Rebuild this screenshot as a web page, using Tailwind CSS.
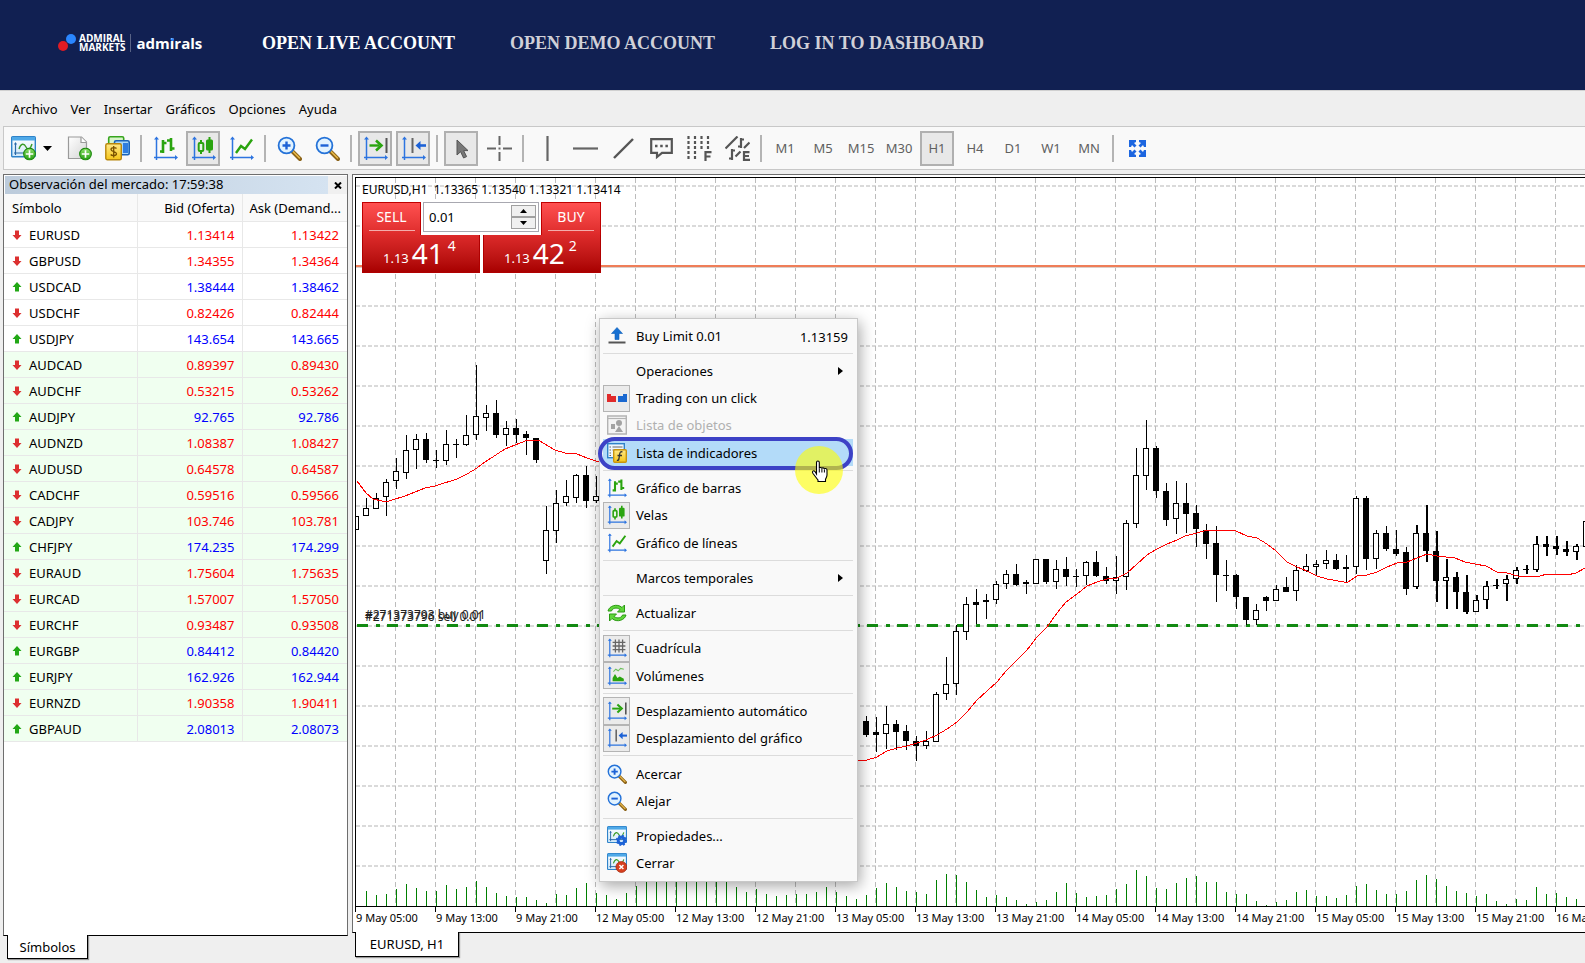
<!DOCTYPE html>
<html lang="es">
  <head>
    <meta charset="UTF-8" />
    <title>Admiral Markets - WebTrader</title>
    <script src="https://cdn.jsdelivr.net/npm/@tailwindcss/browser@4"></script>
  </head>
  <body class="min-h-screen flex flex-col bg-[#efefef] text-black text-[13px] leading-4 font-['Noto_Sans',sans-serif] overflow-x-hidden">

    <!-- Iconos -->
    <svg class="absolute w-0 h-0">
      <defs>
        <linearGradient id="g-win" x1="0" y1="0" x2="0" y2="1"><stop offset="0" stop-color="#fff" /><stop offset="1" stop-color="#cfe9fb" /></linearGradient>
        <linearGradient id="g-green" x1="0" y1="0" x2="0" y2="1"><stop offset="0" stop-color="#8ee06a" /><stop offset="1" stop-color="#25a012" /></linearGradient>
        <linearGradient id="g-gold" x1="0" y1="0" x2="0" y2="1"><stop offset="0" stop-color="#ffe98a" /><stop offset="1" stop-color="#f5c518" /></linearGradient>
        <linearGradient id="g-doc" x1="0" y1="0" x2="1" y2="1"><stop offset="0" stop-color="#fff" /><stop offset="1" stop-color="#d4d4d4" /></linearGradient>
      </defs>
      <symbol id="axis" viewBox="0 0 25 25">
        <path d="M3.500 2v22M1 21.500h22" stroke="#2d74e0" stroke-width="1.500" fill="none" />
        <path d="M1 3.500 3.500 .5 6 3.500zM22 19l3 2.500-3 2.500z" fill="#2d74e0" />
      </symbol>
      <symbol id="plus" viewBox="0 0 14 14">
        <circle cx="7" cy="7" r="6.300" fill="url(#g-green)" stroke="#1f8a10" stroke-width="1.200" />
        <path d="M7 3v8M3 7h8" stroke="#fff" stroke-width="1.800" />
      </symbol>
      <symbol id="window" viewBox="0 0 25 25">
        <rect x=".7" y=".7" width="23.600" height="20" rx="1" fill="url(#g-win)" stroke="#2f83c9" stroke-width="1.400" />
        <rect x="1" y="1" width="23" height="3.500" fill="#4fa9e8" />
        <path d="M4.500 7v12M3 17h19" stroke="#2b6aa8" stroke-width="1.200" />
        <path d="M3 8.500 4.500 6 6 8.500z" fill="#2b6aa8" />
        <path d="M8 13c2-6 5-6 7-2s4 3 6-3" fill="none" stroke="#3a9c28" stroke-width="1.400" />
      </symbol>
      <symbol id="newchart" viewBox="0 0 25 25">
        <use href="#window" />
        <use href="#plus" x="12" y="11.500" width="13" height="13" />
      </symbol>
      <symbol id="newdoc" viewBox="0 0 25 25">
        <path d="M1.500 1h13l5 5v16.500h-18z" fill="url(#g-doc)" stroke="#9a9a9a" stroke-width="1.200" />
        <path d="M14 1v5.500h5.500" fill="#fff" stroke="#9a9a9a" stroke-width="1.200" />
        <use href="#plus" x="12" y="11.500" width="13" height="13" />
      </symbol>
      <symbol id="symbols" viewBox="0 0 25 25">
        <rect x="3.700" y=".8" width="15" height="14" rx="1.500" fill="#d7f5c9" stroke="#37a51e" stroke-width="1.600" />
        <rect x="9.500" y="4.700" width="14.700" height="14" rx="1.500" fill="#a8d8fa" stroke="#1c64b8" stroke-width="1.600" />
        <rect x="18" y="7" width="5" height="10" fill="#2f7de0" />
        <rect x=".8" y="7.800" width="15.500" height="16" rx="1.500" fill="url(#g-gold)" stroke="#b8860b" stroke-width="1.400" />
        <path d="M11.500 12.500c-1-1.300-5.500-1.500-5.500 1s5.500 1.800 5.500 4.200-4.800 2.200-5.800.8M8.700 10v11.500" fill="none" stroke="#7a5200" stroke-width="1.300" />
      </symbol>
      <symbol id="bars" viewBox="0 0 25 25">
        <use href="#axis" />
        <path d="M10 4v13M10 15.500H7M10 7h3.500M18 2v13M18 4.500h-4M18 12.500h3.500" stroke="#2aa40f" stroke-width="2.600" fill="none" />
      </symbol>
      <symbol id="candles" viewBox="0 0 25 25">
        <use href="#axis" />
        <path d="M10 4v14M18.500 1v16" stroke="#2aa40f" stroke-width="2" />
        <rect x="7.700" y="7" width="4.600" height="8" rx="1" fill="#e9f7e6" stroke="#2aa40f" stroke-width="2" />
        <rect x="15" y="3.500" width="7" height="11" rx="1.500" fill="#2aa40f" />
      </symbol>
      <symbol id="line" viewBox="0 0 25 25">
        <use href="#axis" />
        <path d="M7 17l5-7 4 3 7-9.500" stroke="#2aa40f" stroke-width="2.400" fill="none" />
      </symbol>
      <symbol id="zoom" viewBox="0 0 25 25">
        <path d="M15.500 15.500 23 23" stroke="#8a6116" stroke-width="4" stroke-linecap="round" />
        <path d="M16 15.500l6.500 6.500" stroke="#e9b949" stroke-width="1.600" stroke-linecap="round" />
        <circle cx="9.500" cy="9.500" r="7.900" fill="#e2f3ff" stroke="#2472d8" stroke-width="1.800" />
      </symbol>
      <symbol id="zoomin" viewBox="0 0 25 25">
        <use href="#zoom" />
        <path d="M9.500 5.500v8M5.500 9.500h8" stroke="#1d62d6" stroke-width="2.400" />
      </symbol>
      <symbol id="zoomout" viewBox="0 0 25 25">
        <use href="#zoom" />
        <path d="M5.500 9.500h8" stroke="#1d62d6" stroke-width="2.400" />
      </symbol>
      <symbol id="autoscroll" viewBox="0 0 25 25">
        <use href="#axis" />
        <path d="M6.500 9.500h10" stroke="#2aa40f" stroke-width="2.400" />
        <path d="M13 4.500l5.500 5-5.500 5" fill="none" stroke="#2aa40f" stroke-width="2.600" />
        <path d="M23.500 2v15" stroke="#555" stroke-width="2" />
      </symbol>
      <symbol id="shift" viewBox="0 0 25 25">
        <use href="#axis" />
        <path d="M11.500 2v15" stroke="#666" stroke-width="2" />
        <path d="M17 9.500h8" stroke="#1d62d6" stroke-width="2.600" />
        <path d="M14.500 9.500l5-4.500v9z" fill="#1d62d6" />
      </symbol>
      <symbol id="cursor" viewBox="0 0 25 25">
        <path d="M8 4v15l3.600-3.300 3 6.300 3-1.400-3-6H19z" fill="#777" stroke="#555" stroke-width="1" />
      </symbol>
      <symbol id="cross" viewBox="0 0 25 25">
        <path d="M12.500 0v9M12.500 16v9M0 12.500h9M16 12.500h9" stroke="#666" stroke-width="2" />
        <rect x="11.500" y="11.500" width="2" height="2" fill="#666" />
      </symbol>
      <symbol id="vline" viewBox="0 0 25 25"><path d="M12.500 0v25" stroke="#666" stroke-width="2.200" /></symbol>
      <symbol id="hline" viewBox="0 0 25 25"><path d="M0 12.500h25" stroke="#666" stroke-width="2.200" /></symbol>
      <symbol id="trend" viewBox="0 0 25 25"><path d="M3 22l19-19" stroke="#555" stroke-width="2.400" /></symbol>
      <symbol id="text" viewBox="0 0 25 25">
        <path d="M2.200 3.200h20.600v13.600H13L8 21v-4.200H2.200z" fill="none" stroke="#555" stroke-width="2.200" />
        <path d="M6 10h2.500M11.200 10h2.500M16.400 10h2.500" stroke="#555" stroke-width="2.400" />
      </symbol>
      <symbol id="fibo" viewBox="0 0 25 25">
        <path d="M1.500 0v25M8 0v25M14.500 0v14M21 0v14" stroke="#555" stroke-width="2.200" stroke-dasharray="3 2" />
        <path d="M18.500 25v-8.800h6M18.500 20.500h5" fill="none" stroke="#555" stroke-width="2.200" />
      </symbol>
      <symbol id="equi" viewBox="0 0 25 25">
        <path d="M.5 12.500l12-12M10.500 20.500l5-5M19 12l5.500-5.500M16 2v10M16 10.500h-3M16 3.500h3M7 13v11M7 14.500h3M7 22.500h-3" stroke="#555" stroke-width="2.200" fill="none" />
        <path d="M24.500 16.200h-5.500v7.700h6M19 20h5" fill="none" stroke="#555" stroke-width="2.200" />
      </symbol>
      <symbol id="full" viewBox="0 0 17 17">
        <path d="M0 0h7v2l-2 1 2.500 2.500-2 2L3 5 2 7H0zM17 0h-7v2l2 1-2.500 2.500 2 2L14 5l1 2h2zM0 17h7v-2l-2-1 2.500-2.500-2-2L3 12l-1-2H0zM17 17h-7v-2l2-1-2.500-2.500 2-2L14 12l1-2h2z" fill="#1d66e0" />
      </symbol>
      <symbol id="limit" viewBox="0 0 20 20">
        <path d="M10 1.500 4.500 7.500H8v6h4v-6h3.500z" fill="#1670d2" stroke="#0f5fb8" stroke-width=".6" />
        <path d="M1.500 16.500h17" stroke="#555" stroke-width="2" />
      </symbol>
      <symbol id="oneclick" viewBox="0 0 20 20">
        <path d="M0 6h4v2h5v6H0z" fill="#e02a2a" />
        <path d="M20 6h-4v2h-5v6h9z" fill="#1a68d0" />
      </symbol>
      <symbol id="objects" viewBox="0 0 20 20">
        <path d="M.7 1h18.600v18H.7z" fill="#f4f4f4" stroke="#b3b3b3" stroke-width="1.400" />
        <path d="M1 3.500h18" stroke="#b3b3b3" stroke-width="1.200" />
        <path d="M4 9h4v5H4zM8 17l4-6 4 6z" fill="#a3a3a3" /><circle cx="12" cy="8" r="3" fill="#a3a3a3" />
      </symbol>
      <symbol id="indicators" viewBox="0 0 20 20">
        <rect x=".7" y=".7" width="16.600" height="14" fill="#eef7ff" stroke="#2f83c9" stroke-width="1.400" />
        <path d="M2.500 4h1.500M5.500 4h10M2.500 7h1.500M5.500 7h10M2.500 10h1.500M2.500 12.500h1.500" stroke="#666" stroke-width="1.200" />
        <rect x="6.700" y="6.700" width="12.600" height="12.600" rx="1" fill="url(#g-gold)" stroke="#c8930c" stroke-width="1.400" />
        <path d="M15.500 9c-2-.8-2.600.5-2.800 2l-.8 5c-.2 1-.9 1.600-2 1.200M10.500 12.500h4.500" fill="none" stroke="#333" stroke-width="1.300" />
      </symbol>
      <symbol id="refresh" viewBox="0 0 20 20">
        <path d="M1 8c1-5 9-8 14-3.500L17.500 2v7H10.500L13 6.500C9.500 4 5.500 5 4.500 8z" fill="#5fd63a" stroke="#2a9a12" stroke-width="1" />
        <path d="M19 12c-1 5-9 8-14 3.500L2.500 18v-7h7L7 13.500c3.500 2.500 7.500 1.500 8.500-1.500z" fill="#5fd63a" stroke="#2a9a12" stroke-width="1" />
      </symbol>
      <symbol id="gridicon" viewBox="0 0 25 25">
        <use href="#axis" />
        <path d="M10.500 2v16M15 2v16M19.500 2v16M7 5.500h16M7 10h16M7 14.500h16" stroke="#666" stroke-width="1.600" />
      </symbol>
      <symbol id="volumes" viewBox="0 0 25 25">
        <use href="#axis" />
        <path d="M7 19v-4l3-5 3 5 3-2 5 3v3z" fill="#2aa40f" />
        <path d="M8 7l3-3 3 2 3-3 4 1" fill="none" stroke="#6bbf5a" stroke-width="1.300" />
      </symbol>
      <symbol id="props" viewBox="0 0 25 25">
        <use href="#window" />
        <circle cx="18" cy="18" r="4" fill="none" stroke="#1d62d6" stroke-width="3.600" />
        <circle cx="18" cy="18" r="6" fill="none" stroke="#1d62d6" stroke-width="2" stroke-dasharray="2.400 2.310" />
      </symbol>
      <symbol id="close" viewBox="0 0 25 25">
        <use href="#window" />
        <circle cx="18" cy="17.500" r="6.800" fill="#d8401f" stroke="#a82a10" stroke-width="1" />
        <path d="M15.500 15l5 5M20.500 15l-5 5" stroke="#fff" stroke-width="1.800" />
      </symbol>
      <symbol id="up" viewBox="0 0 10 10"><path d="M5 0 .5 5H3v4.500h4V5h2.500z" fill="#22a816" /></symbol>
      <symbol id="down" viewBox="0 0 10 10"><path d="M5 10 .5 5H3V.5h4V5h2.500z" fill="#dc3030" /></symbol>
    </svg>

    <!-- Cabecera -->
    <header class="h-[90px] shrink-0 bg-[#112052] flex items-center pl-[58px] pb-1">
      <a href="#" class="w-[145px] flex items-center text-white font-['Open_Sans',sans-serif]">
        <svg class="w-[18px] h-5" viewBox="0 0 18 20"><circle cx="13" cy="6" r="5" fill="#2a86ff" /><circle cx="5" cy="13" r="5" fill="#e01b24" /></svg>
        <span class="ml-[3px] text-[10px] leading-[9px] font-bold">ADMIRAL<br />MARKETS</span>
        <span class="w-px h-[18px] bg-white/30 mx-[5px]"></span>
        <span class="text-[15px] leading-5 font-bold">adm<span class="relative">i<i class="absolute left-px top-[5px] w-[3px] h-[3px] rounded-full bg-[#2a86ff]"></i></span>rals</span>
      </a>
      <nav class="flex gap-[55px] ml-[59px] font-['Liberation_Serif',serif] font-bold text-[18px] leading-5 whitespace-nowrap">
        <a href="#" class="text-white">OPEN LIVE ACCOUNT</a>
        <a href="#" class="text-[#d0d0d8]">OPEN DEMO ACCOUNT</a>
        <a href="#" class="text-[#d0d0d8]">LOG IN TO DASHBOARD</a>
      </nav>
    </header>

    <!-- Menu principal -->
    <nav class="h-9 shrink-0 border-t border-[#d0d0d0] flex items-center gap-[13px] px-3">
      <button>Archivo</button>
      <button>Ver</button>
      <button>Insertar</button>
      <button>Gráficos</button>
      <button>Opciones</button>
      <button>Ayuda</button>
    </nav>

    <!-- Barra de herramientas -->
    <div id="toolbar" class="ml-[3px] h-11 shrink-0 border border-r-0 border-[#c8c8c8] bg-[#f9f9f9] flex items-center gap-1 pl-[3px] text-[#606060]"></div>

    <main class="flex-1 flex gap-1 pl-[3px] pt-1">
      <!-- Observacion del mercado -->
      <aside class="w-[345px] shrink-0 flex flex-col">
        <section class="flex-1 bg-white border border-[#6e6e6e] border-b-black">
          <div class="flex h-[19px] pt-px pl-px">
            <h2 class="flex-1 pl-1 leading-4 bg-linear-to-r from-[#bccbdb] to-[#d5e3f1]">Observación del mercado: 17:59:38</h2>
            <button aria-label="Cerrar panel" class="w-[19px] grid place-items-center bg-[#f0f0f0]">
              <svg class="w-2 h-[7px]" viewBox="0 0 8 7"><path d="M1 .5l6 6M7 .5l-6 6" stroke="#000" stroke-width="2" /></svg>
            </button>
          </div>
          <table class="w-full table-fixed border-collapse">
            <thead>
              <tr class="h-[27px] bg-[#f9f9f9] border-b border-[#e8e8e8]">
                <th class="w-[133px] pl-2 pt-px text-left font-normal border-r border-[#e8e8e8]">Símbolo</th>
                <th class="w-[105px] pr-[7px] pt-px text-right font-normal border-r border-[#e8e8e8]">Bid (Oferta)</th>
                <th class="pl-[7px] pt-px text-left font-normal whitespace-nowrap">Ask (Demand...</th>
              </tr>
            </thead>
            <tbody id="quotes"></tbody>
          </table>
        </section>
        <button class="relative ml-1 -mt-px mb-1 w-[81px] h-6 bg-white border border-t-0 border-black shadow-[1px_1px_1px_#999]">Símbolos</button>
      </aside>

      <!-- Grafico -->
      <div class="flex-1 min-w-0 flex flex-col">
        <section class="flex-1 min-w-0 flex flex-col bg-white border-t border-l border-b border-[#6e6e6e] border-b-black pl-[2px] pt-[2px] overflow-hidden">
          <div class="relative flex-1 border border-r-0 border-black">
            <svg id="chart" class="absolute inset-0 w-full h-full" shape-rendering="crispEdges"></svg>

            <div class="relative pt-[3px] pl-[6px]">
              <p class="text-[12px] leading-[18px] whitespace-pre">EURUSD,H1  1.13365 1.13540 1.13321 1.13414</p>
              <!-- Trading con un click -->
              <div class="mt-[3px] w-[239px] text-white bg-white">
                <div class="flex h-[33px] justify-between">
                  <button class="w-[59px] bg-linear-to-b from-[#ff5050] to-[#dd2a2a] border-t border-x border-[#c00000] pt-1 flex flex-col items-center justify-between"><span class="text-[14px] leading-5">SELL</span><span class="w-[46px] h-px bg-white/60 mb-1"></span></button>
                  <div class="flex w-[116px] h-[30px] border border-[#a8a8b0] bg-white p-[2px]">
                    <input aria-label="Volumen" value="0.01" class="w-0 flex-1 pl-[3px] text-black outline-none" />
                    <div class="w-[25px] flex flex-col">
                      <button aria-label="Subir" class="flex-1 border border-[#a0a0a0] bg-[#f0f0f0] grid place-items-center"><svg class="w-[7px] h-1" viewBox="0 0 7 4"><path d="M0 4h7L3.500 0z" /></svg></button>
                      <button aria-label="Bajar" class="flex-1 border border-[#a0a0a0] bg-[#f0f0f0] grid place-items-center"><svg class="w-[7px] h-1" viewBox="0 0 7 4"><path d="M0 0h7L3.500 4z" /></svg></button>
                    </div>
                  </div>
                  <button class="w-[60px] bg-linear-to-b from-[#ff5050] to-[#dd2a2a] border-t border-x border-[#c00000] pt-1 flex flex-col items-center justify-between"><span class="text-[14px] leading-5">BUY</span><span class="w-[46px] h-px bg-white/60 mb-1"></span></button>
                </div>
                <div class="flex h-[38px] gap-[3px]">
                  <div class="flex-1 flex pl-5 gap-[3px] bg-linear-to-b from-[#dd2a2a] to-[#a80000] border-x border-b border-[#b00000]"><span class="pt-[15px] text-[13px]">1.13</span><span class="text-[28px] leading-9">41</span><span class="pt-[3px] pl-px text-[14px]">4</span></div>
                  <div class="flex-1 flex pl-5 gap-[3px] bg-linear-to-b from-[#dd2a2a] to-[#a80000] border-x border-b border-[#b00000]"><span class="pt-[15px] text-[13px]">1.13</span><span class="text-[28px] leading-9">42</span><span class="pt-[3px] pl-px text-[14px]">2</span></div>
                </div>
              </div>
            </div>

            <!-- Menu contextual -->
            <ul id="context" class="absolute left-[243px] top-[140px] w-[259px] h-[564px] flex flex-col pt-[3px] pb-1 pl-[3px] pr-1 bg-[#f9f9f9] border border-[#c8c8c8] shadow-[2px_4px_14px_rgba(0,0,0,0.35)]"></ul>
            <!-- Resaltado y puntero -->
            <div class="absolute left-[242px] top-[259px] w-[255px] h-[33px] rounded-[20px] border-4 border-[#3d42c6]"></div>
            <div class="absolute left-[439px] top-[268px] w-12 h-12 rounded-full bg-[#ffff00]/60"></div>
            <svg class="absolute left-[455px] top-[282px] w-[18px] h-[23px]" viewBox="0 0 18 23">
              <path d="M5.500 14V2.500c0-2 2.800-2 2.800 0V8.500c0-1.500 2.600-1.300 2.600.3 0-1.500 2.500-1.200 2.500.5 0-1.300 2.600-1 2.600.7v5c0 2-1 3-1.500 4.500v2H7v-1.500c-1.500-2-3.500-4.500-5-6.500-1.500-2.300.5-3.500 2-2z" fill="#fff" stroke="#000" stroke-width="1.100" />
              <path d="M8.300 8.500v4M10.900 9v3.500M13.400 9.500v3" stroke="#000" stroke-width="1" />
            </svg>
          </div>
          <!-- Eje de tiempo -->
          <div id="axisrow" class="flex h-[25px] shrink-0 text-[11px] leading-3 whitespace-nowrap"></div>
        </section>
        <button class="relative ml-[3px] -mt-px mb-[6px] w-[104px] h-[25px] bg-white border border-t-0 border-black shadow-[1px_1px_1px_#999]">EURUSD, H1</button>
      </div>
    </main>

    <script>
      // ---- barra de herramientas ----
      const tools = [
        ["newchart", "Nuevo gráfico"], ["newdoc", "Nueva orden"], ["symbols", "Símbolos"], "|",
        ["bars", "Gráfico de barras"], ["candles", "Velas", 1], ["line", "Gráfico de líneas"], "|",
        ["zoomin", "Acercar"], ["zoomout", "Alejar"], "|",
        ["autoscroll", "Desplazamiento automático", 1], ["shift", "Desplazamiento del gráfico", 1], "|",
        ["cursor", "Cursor", 1], ["cross", "Punto de mira"], "|",
        ["vline", "Línea vertical"], ["hline", "Línea horizontal"], ["trend", "Línea de tendencia"],
        ["text", "Texto"], ["fibo", "Fibonacci"], ["equi", "Canal equidistante"], "|",
        "M1", "M5", "M15", "M30", "H1", "H4", "D1", "W1", "MN", "|",
        ["full", "Pantalla completa"],
      ];
      document.getElementById("toolbar").innerHTML = tools.map((t) => {
        if (t === "|") return '<span class="w-[2px] h-[27px] mx-[2px] shrink-0 bg-[#b4b4b4]"></span>';
        if (typeof t === "string") {
          return t === "H1"
            ? `<button class="w-[34px] h-[35px] shrink-0 border-2 border-[#b0b0b0] bg-[#e8e8e8]">${t}</button>`
            : `<button class="w-[34px] h-[35px] shrink-0">${t}</button>`;
        }
        const [id, label, on] = t;
        if (id === "newchart") {
          return `<button aria-label="${label}" class="w-[51px] h-[35px] shrink-0 flex items-center gap-[7px] pl-1"><svg class="w-[25px] h-[25px]"><use href="#${id}"/></svg><svg class="w-[9px] h-[5px]" viewBox="0 0 9 5"><path d="M0 0h9L4.500 5z"/></svg></button>`;
        }
        const size = id === "full" ? "w-[17px] h-[17px]" : "w-[25px] h-[25px]";
        const box = on ? "border-2 border-[#b0b0b0] bg-[#e8e8e8]" : "";
        return `<button aria-label="${label}" class="w-[34px] h-[35px] shrink-0 grid place-items-center ${box}"><svg class="${size}"><use href="#${id}"/></svg></button>`;
      }).join("");

      // ---- cotizaciones: simbolo, bid, ask, sube ----
      const quotes = [
        ["EURUSD", "1.13414", "1.13422", 0], ["GBPUSD", "1.34355", "1.34364", 0], ["USDCAD", "1.38444", "1.38462", 1],
        ["USDCHF", "0.82426", "0.82444", 0], ["USDJPY", "143.654", "143.665", 1], ["AUDCAD", "0.89397", "0.89430", 0],
        ["AUDCHF", "0.53215", "0.53262", 0], ["AUDJPY", "92.765", "92.786", 1], ["AUDNZD", "1.08387", "1.08427", 0],
        ["AUDUSD", "0.64578", "0.64587", 0], ["CADCHF", "0.59516", "0.59566", 0], ["CADJPY", "103.746", "103.781", 0],
        ["CHFJPY", "174.235", "174.299", 1], ["EURAUD", "1.75604", "1.75635", 0], ["EURCAD", "1.57007", "1.57050", 0],
        ["EURCHF", "0.93487", "0.93508", 0], ["EURGBP", "0.84412", "0.84420", 1], ["EURJPY", "162.926", "162.944", 1],
        ["EURNZD", "1.90358", "1.90411", 0], ["GBPAUD", "2.08013", "2.08073", 1],
      ];
      document.getElementById("quotes").innerHTML = quotes.map(([s, bid, ask, up], i) => `
        <tr class="h-[26px] border-b border-[#e8e8e8] ${i > 4 ? "bg-[#f0fff0]" : ""}">
          <td class="pt-px border-r border-[#e8e8e8]"><div class="flex items-center gap-[7px] pl-2"><svg class="w-[10px] h-[10px]"><use href="#${up ? "up" : "down"}"/></svg>${s}</div></td>
          <td class="pt-px border-r border-[#e8e8e8] pr-[7px] text-right ${up ? "text-[#0000ff]" : "text-[#ff0000]"}">${bid}</td>
          <td class="pt-px pr-2 text-right ${up ? "text-[#0000ff]" : "text-[#ff0000]"}">${ask}</td>
        </tr>`).join("");

      // ---- menu contextual: icono, texto, estado ----
      const menu = [
        ["limit", "Buy Limit 0.01", "price"], "-",
        ["", "Operaciones", "sub"], ["oneclick", "Trading con un click", "on"], ["objects", "Lista de objetos", "off"],
        ["indicators", "Lista de indicadores", "hover"], "-",
        ["bars", "Gráfico de barras"], ["candles", "Velas", "on"], ["line", "Gráfico de líneas"], "-",
        ["", "Marcos temporales", "sub"], "-",
        ["refresh", "Actualizar"], "-",
        ["gridicon", "Cuadrícula", "on"], ["volumes", "Volúmenes", "on"], "-",
        ["autoscroll", "Desplazamiento automático", "on"], ["shift", "Desplazamiento del gráfico", "on"], "-",
        ["zoomin", "Acercar"], ["zoomout", "Alejar"], "-",
        ["props", "Propiedades..."], ["close", "Cerrar"],
      ];
      document.getElementById("context").innerHTML = menu.map((m) => {
        if (m === "-") return '<li class="h-2 shrink-0 flex items-center"><hr class="w-full border-[#dcdcdc]"></li>';
        const [icon, label, st] = m;
        const bg = st === "hover" ? "bg-[#b3dbf9]" : "";
        const color = st === "off" ? "text-[#b0b0b0]" : "";
        const box = st === "on" ? "border border-[#b4b4b4] bg-[#ebebeb]" : "";
        let end = "";
        if (st === "price") end = '<span class="pr-[5px] pt-[2px]">1.13159</span>';
        if (st === "sub") end = '<svg class="w-[5px] h-2 mr-[10px]" viewBox="0 0 5 8"><path d="M0 0v8l5-4z"/></svg>';
        return `<li class="flex-1 min-h-0 flex"><button class="flex-1 flex items-center text-left ${bg} ${color}">
          <span class="w-[27px] h-full mr-[6px] grid place-items-center ${box}">${icon ? `<svg class="w-5 h-5"><use href="#${icon}"/></svg>` : ""}</span>
          <span class="flex-1">${label}</span>${end}</button></li>`;
      }).join("");

      // ---- eje de tiempo ----
      const times = ["9 May 05:00", "9 May 13:00", "9 May 21:00"];
      for (const d of [12, 13, 14, 15]) for (const h of ["05", "13", "21"]) times.push(`${d} May ${h}:00`);
      times.push("16 May 05:00");
      document.getElementById("axisrow").innerHTML = times.map((t) =>
        `<div class="w-20 shrink-0"><div class="w-px h-[5px] bg-black"></div><div class="pl-px">${t}</div></div>`).join("");

      // ---- velas: maximo, techo, base, minimo, rellena (una cada 10px) ----
      const left = [
        [516,516,530,530],[498,508,516,516],[493,498,509,509],[479,482,497,516],[458,471,481,489],[435,450,473,479],
        [434,439,450,469],[433,439,460,463,1],[450,460,461,468,1],[430,444,461,465],[439,444,445,458,1],[415,435,445,446],
        [365,416,435,440],[405,413,418,431],[400,413,435,438,1],[421,428,435,446],[419,428,435,443,1],[431,434,438,455,1],
        [438,438,460,463,1],[506,530,561,574],[490,503,531,543],[480,496,503,506],[474,475,498,503],[466,475,501,508,1],
        [476,496,501,503],
      ];
      const right = [
        [716,721,735,737,1],[717,732,735,752,1],[706,724,734,749],[720,724,732,750,1],[725,731,741,750,1],[736,741,746,761,1],
        [731,741,746,749],[692,694,742,742],[657,684,694,700],[625,631,684,695],[597,604,632,640],[589,602,605,624,1],
        [594,600,602,619,1],[581,584,600,604],[570,574,584,589],[564,574,585,586,1],[580,582,584,594,1],[559,559,584,584],
        [559,559,582,584,1],[560,569,582,589],[557,569,577,586,1],[569,576,577,587,1],[561,562,576,585],[551,562,576,577,1],
        [567,576,581,584,1],[556,577,581,594],[520,523,577,590],[448,475,524,528],[420,448,476,490],[446,448,491,498,1],
        [483,491,520,526,1],[481,503,519,534],[483,503,514,533,1],[505,513,529,547,1],[524,530,544,559,1],[526,543,575,602,1],
        [560,575,576,591,1],[574,575,597,609,1],[597,597,620,625,1],[604,610,620,625],[596,597,601,611,1],[585,589,601,601],
        [577,587,592,592,1],[565,570,591,601],[554,566,571,572],[560,564,567,576],[550,560,564,569],[554,560,569,570,1],
        [555,567,569,582,1],[496,498,567,574],[496,498,559,570,1],[530,533,559,569],[526,533,549,551,1],[530,549,554,556,1],
        [547,552,589,595,1],[525,533,587,589],[505,533,551,562,1],[531,551,581,602,1],[559,577,581,609],[572,577,592,609,1],
        [575,592,612,614,1],[595,600,612,612],[581,586,600,609],[579,585,586,589,1],[575,579,584,601],[567,570,579,584],
        [565,569,570,574,1],[536,544,570,572],[536,544,547,556,1],[536,546,549,555,1],[541,549,552,556,1],[544,546,552,560],
        [521,521,547,547],
      ];
      const volumes = [
        15,11,12,17,22,18,15,15,21,17,19,25,19,13,10,9,9,6,3,12,11,18,23,13,11,7,13,20,25,26,28,30,30,28,26,25,24,19,14,17,12,10,
        11,12,12,14,19,14,10,7,11,18,23,19,15,14,12,26,32,31,24,16,9,11,9,6,2,4,6,14,23,13,9,10,11,17,22,36,30,18,17,23,28,30,24,
        24,14,12,12,5,1,4,6,14,16,10,10,8,11,20,22,16,12,12,15,26,31,27,20,15,13,10,12,5,2,7,6,19,12,13,9,7,
      ];
      const maLeft = "357,481 366,493 373,499 382,501 389,501 405,496 425,488 435,486 457,479 467,474 477,468 485,462 505,449 515,445 528,440 538,440 555,450 565,453 577,454 587,458 602,463";
      const maRight = "855,762 858,761 867,760 877,757 887,751 897,748 907,746 917,743 926,740 937,735 947,729 957,722 967,712 977,700 987,691 997,682 1006,671 1017,660 1027,650 1037,637 1047,627 1057,613 1066,602 1077,594 1087,586 1097,582 1107,579 1117,578 1127,573 1137,564 1147,555 1157,549 1167,544 1177,540 1185,536 1197,533 1207,530 1228,530 1236,531 1247,536 1257,538 1267,544 1276,551 1287,562 1297,567 1307,571 1317,576 1327,579 1344,582 1348,582 1357,576 1367,575 1377,572 1387,567 1397,563 1407,562 1417,558 1427,554 1437,556 1455,558 1465,562 1475,564 1486,566 1497,572 1507,573 1518,576 1540,576 1547,574 1567,575 1576,573 1585,568";

      let out = "";
      // cuadricula
      for (let y = 186; y < 900; y += 40) out += `<path d="M356 ${y}H3000" stroke="#dadada" stroke-width="2" stroke-dasharray="4 2"/>`;
      for (let x = 395; x < 3000; x += 40) out += `<path d="M${x}.5 178V906" stroke="#bcbcbc" stroke-width="1" stroke-dasharray="5 3"/>`;
      // niveles
      out += '<path d="M356 266H3000" stroke="#ef7d58" stroke-width="2"/><path d="M356 267.500H3000" stroke="#dccfca"/>';
      out += '<path d="M357 625.500H3000" stroke="#128a12" stroke-width="3" stroke-dasharray="11 8 4 7"/>';

      volumes.forEach((v, i) => { out += `<rect x="${366 + i * 10}" y="${906 - v}" width="1" height="${v}" fill="#008000"/>`; });

      const candle = (x, [h, t, b, l, full]) => {
        const w = x > 1410 ? 2 : 1;
        out += `<rect x="${x}" y="${h}" width="${w}" height="${l - h}" fill="#000"/>`;
        out += full
          ? `<rect x="${x - 3}" y="${t}" width="6" height="${b - t}" fill="#000"/>`
          : `<rect x="${x - 2.5}" y="${t + 0.5}" width="5" height="${b - t - 1}" fill="#fff" stroke="#000"/>`;
      };
      left.forEach((c, i) => candle(356 + i * 10, c));
      right.forEach((c, i) => candle(866 + i * 10, c));

      out += `<polyline points="${maLeft}" fill="none" stroke="#ff0000"/><polyline points="${maRight}" fill="none" stroke="#ff0000"/>`;
      out += '<g font-size="12" fill="#222"><text x="365" y="619">#271373793 buy 0.01</text><text x="365" y="621">#271373796 sell 0.01</text></g>';
      document.getElementById("chart").innerHTML = `<g transform="translate(-356 -178)">${out}</g>`;
    </script>
  </body>
</html>
